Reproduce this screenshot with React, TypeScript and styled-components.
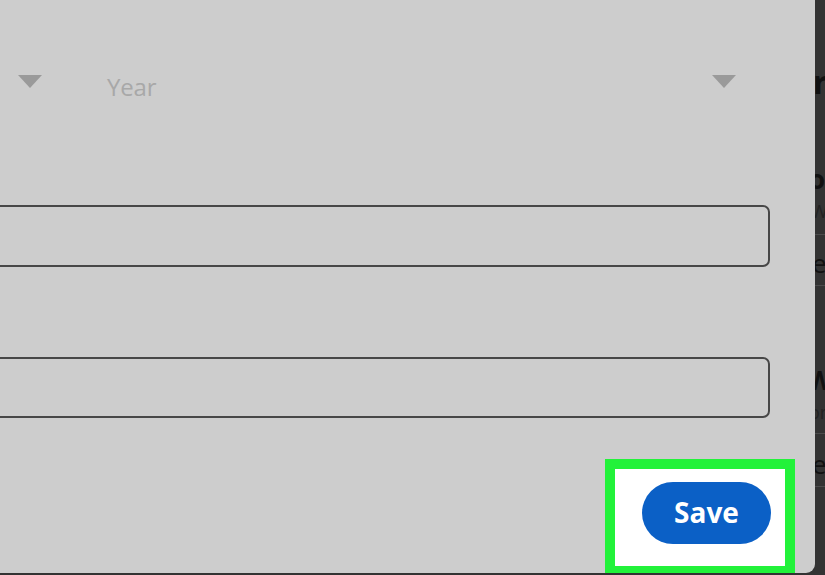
import styled, { createGlobalStyle } from "styled-components"

const GlobalStyle = createGlobalStyle`
  html, body {
    margin: 0;
    padding: 0;
    overflow: hidden;
    background: #333333;
  }
  body {
    font-family: "Open Sans", "Liberation Sans", sans-serif;
  }
`

const Screen = styled.div`
  display: flex;
  width: 825px;
  height: 575px;
  overflow: hidden;
`

// the edit dialog, cropped on its left side
const Modal = styled.div`
  width: 815px;
  flex-shrink: 0;
  height: 573px;
  background-color: #cdcdcd;
  border-bottom-right-radius: 9px;
  overflow: hidden;
  display: flex;
  flex-direction: column;
`

const FormBody = styled.div`
  display: flex;
  flex-direction: column;
  padding: 60px 45px 32px 0;
  margin-left: -124px;
`

const SelectRow = styled.div`
  display: grid;
  grid-template-columns: 200px 1fr;
  gap: 14px;
  height: 50px;
`

const Select = styled.div`
  display: flex;
  align-items: center;
  justify-content: space-between;
  padding: 0 34px 0 17px;
  font-size: 24px;
  color: #a8a8a8;
  letter-spacing: -0.2px;
`

const Placeholder = styled.span`
  margin-top: 2px;
`

const Caret = styled.svg`
  width: 24px;
  height: 13px;
  margin-top: -8px;
  fill: #9a9a9a;
`

const Input = styled.div<{ $top: number; $height: number }>`
  margin-top: ${(p) => p.$top}px;
  height: ${(p) => p.$height}px;
  box-sizing: border-box;
  border: 2px solid #474747;
  border-radius: 7px;
`

const Divider = styled.div`
  height: 2px;
  background-color: #b8b8b8;
`

const Footer = styled.div`
  display: flex;
  justify-content: flex-end;
  padding: 9px 20px 0 0;
`

// green annotation frame round the button
const Highlight = styled.div`
  width: 190px;
  height: 117px;
  box-sizing: border-box;
  border: 10px solid #22f23a;
  background-color: #ffffff;
  display: flex;
  justify-content: flex-end;
  padding: 13px 14px 0 0;
`

const SaveButton = styled.button`
  width: 129px;
  height: 62px;
  border: none;
  border-radius: 31px;
  background-color: #0b60c6;
  color: #ffffff;
  font-family: "Open Sans", "Liberation Sans", sans-serif;
  font-size: 28px;
  font-weight: 700;
  padding: 0 0 2px 0;
  cursor: pointer;
`

// the page behind the dialog, only a sliver is visible
const Backdrop = styled.div`
  flex: 1;
  overflow: hidden;
  background-color: #333333;
  display: flex;
  flex-direction: column;
`

const BackLine = styled.div<{ $top: number; $size: number; $shift: number; $bold?: boolean; $color?: string }>`
  margin-top: ${(p) => p.$top}px;
  margin-left: ${(p) => p.$shift}px;
  white-space: nowrap;
  font-family: "Open Sans", "Liberation Sans", sans-serif;
  font-size: ${(p) => p.$size}px;
  line-height: 1.1;
  font-weight: ${(p) => (p.$bold ? 700 : 400)};
  color: ${(p) => p.$color || "#111111"};
`

const BackRule = styled.div<{ $top: number }>`
  margin-top: ${(p) => p.$top}px;
  height: 1px;
  background-color: #4c4c4c;
`

function CaretDown() {
  return (
    <Caret viewBox="0 0 24 13">
      <polygon points="0,0 24,0 12,13" />
    </Caret>
  )
}

export default function App() {
  return (
    <>
      <GlobalStyle />
      <Screen>
        <Modal>
          <FormBody>
            <SelectRow>
              <Select>
                <Placeholder />
                <CaretDown />
              </Select>
              <Select>
                <Placeholder>Year</Placeholder>
                <CaretDown />
              </Select>
            </SelectRow>
            <Input $top={95} $height={62} />
            <Input $top={90} $height={61} />
          </FormBody>
          <Divider />
          <Footer>
            <Highlight>
              <SaveButton>Save</SaveButton>
            </Highlight>
          </Footer>
        </Modal>
        <Backdrop>
          <BackLine $top={64} $size={32} $shift={-2} $bold>r</BackLine>
          <BackLine $top={66} $size={26} $shift={-6} $bold>o.</BackLine>
          <BackLine $top={8} $size={18} $shift={-4} $color="#222222">W</BackLine>
          <BackRule $top={12} />
          <BackLine $top={14} $size={26} $shift={-3}>e</BackLine>
          <BackRule $top={8} />
          <BackLine $top={80} $size={26} $shift={-8} $bold>W</BackLine>
          <BackLine $top={8} $size={18} $shift={-6} $color="#222222">or</BackLine>
          <BackRule $top={10} />
          <BackLine $top={16} $size={26} $shift={-3}>e</BackLine>
          <BackRule $top={8} />
        </Backdrop>
      </Screen>
    </>
  )
}
